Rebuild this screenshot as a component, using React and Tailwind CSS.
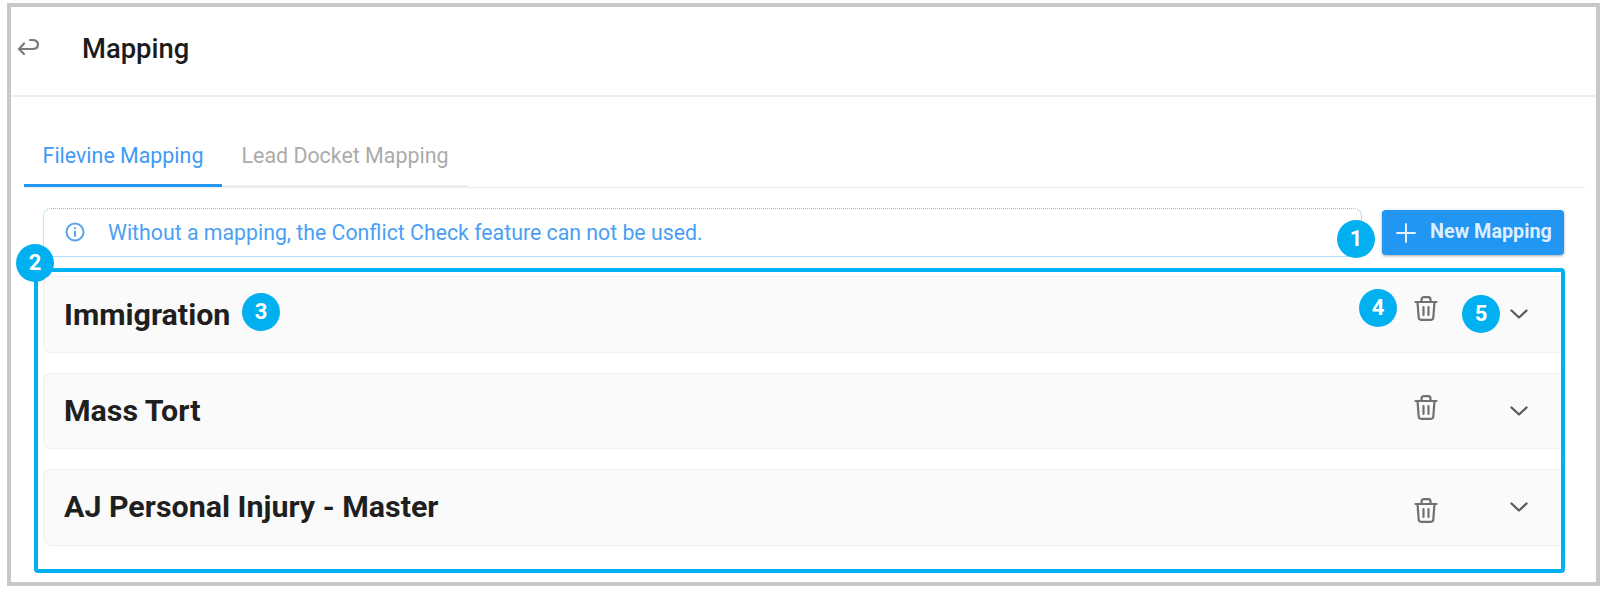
import React from "react";

function Badge({ n, className }) {
  return (
    <span className={`absolute flex h-[38px] w-[38px] items-center justify-center rounded-full bg-[#00b0f0] text-[22px] font-bold leading-none text-white ${className}`}>
      {n}
    </span>
  );
}

function Trash() {
  return (
    <svg width="24" height="25" viewBox="0 0 24 25" fill="none" stroke="#707070" strokeWidth="2.200" strokeLinecap="round" strokeLinejoin="round">
      <path d="M1.500 6h21" />
      <path d="M7.500 6V3.500C7.500 2 8.500 1.200 10 1.200h4c1.500 0 2.500.8 2.500 2.300V6" />
      <path d="M3.500 6l1.200 15.500c.1 1.500 1 2.300 2.400 2.300h9.800c1.400 0 2.300-.8 2.400-2.300L20.500 6" />
      <path d="M9.500 11v8M14.500 11v8" />
    </svg>
  );
}

function Chevron() {
  return (
    <svg width="18" height="10" viewBox="0 0 18 10" fill="none" stroke="#5a5a5a" strokeWidth="2.300" strokeLinecap="round" strokeLinejoin="round">
      <path d="M1.500 1.500L9 8.500l7.500-7" />
    </svg>
  );
}

function Row({ title, trashClass, titleClass = "", children }) {
  return (
    <div className="relative flex h-[76.500px] items-center rounded-l-lg border border-r-0 border-[#f0f0f0] bg-[#fafafa] pl-[20px] pr-[33px]">
      <span className={`text-[30.400px] font-bold leading-none tracking-normal text-[#1f1f1f] ${titleClass}`}>{title}</span>
      <div className="ml-auto flex items-center gap-[72px]">
        <div className={trashClass}>
          <Trash />
        </div>
        <Chevron />
      </div>
      {children}
    </div>
  );
}

export default function App() {
  return (
    <div className="h-[592px] w-[1600px] bg-white pb-[6px] pl-[7px] pt-[3px] font-['Roboto',sans-serif]">
      <div className="flex h-full flex-col border-4 border-[#c8c8c8] bg-white">
        <header className="flex h-[90px] shrink-0 items-center border-b-2 border-[#eeeeee] pb-[6px] pl-[6px]">
          <svg width="24" height="20" viewBox="0 0 24 20" fill="none" stroke="#7a7a7a" strokeWidth="2.200" strokeLinecap="round" strokeLinejoin="round">
            <path d="M7 5.500L2 11l5 5" />
            <path d="M2.500 11h13c3.500 0 5.500-2 5.500-4.500S19 2 15.500 2H13" />
          </svg>
          <h1 className="ml-[41px] mt-[4px] text-[27.400px] font-medium leading-none text-[#1c1c1c]">Mapping</h1>
        </header>

        <div className="flex min-h-0 flex-1 flex-col pl-[13px] pr-[11px] pt-[26px]">
          <nav className="flex h-[65px] shrink-0 border-b border-[#eeeeee]">
            <div className="flex w-[198px] items-center justify-center border-b-[3px] border-[#2196f3] pt-[6px] text-[21.400px] text-[#3f9bf5]">
              Filevine Mapping
            </div>
            <div className="flex w-[246px] items-center justify-center border-b-2 border-[#eeeeee] pb-[1px] pt-[6px] text-[21.400px] text-[#ababab]">
              Lead Docket Mapping
            </div>
          </nav>

          <div className="mt-[20px] flex shrink-0 items-start pl-[19px] pr-[21px]">
            <div className="relative flex h-[49px] flex-1 items-center rounded-lg border border-[#b3dcfb] border-t-[#7fc1f7] border-l-[#8cc8f8] pl-[21px] text-[21.300px] text-[#4a9ff5] [border-left-style:dotted] [border-top-style:dotted]">
              <svg className="-translate-y-px shrink-0" width="20" height="20" viewBox="0 0 20 20" fill="none" stroke="#5aa5ee" strokeWidth="2" strokeLinecap="round">
                <circle cx="10" cy="10" r="8.500" />
                <path d="M10 9.500v4.500M10 6v.2" />
              </svg>
              <span className="ml-[23px]">Without a mapping, the Conflict Check feature can not be used.</span>
              <Badge n="1" className="-right-[14px] top-[11px]" />
            </div>
            <button className="ml-[20px] mt-[2px] flex h-[45px] w-[182px] items-center rounded bg-[#2196f3] pl-[14px] text-[19.800px] font-bold leading-none text-[#ddeeff] shadow-[0_1px_3px_rgba(0,0,0,0.35)]">
              <svg width="20" height="20" viewBox="0 0 20 20" fill="none" stroke="#e4f1fd" strokeWidth="2" strokeLinecap="round">
                <path d="M10 1v18M1 10h18" />
              </svg>
              <span className="ml-[14px] -translate-y-px">New Mapping</span>
            </button>
          </div>

          <section className="relative ml-[10px] mr-[20px] mt-[11px] flex h-[305px] shrink-0 flex-col gap-[20px] rounded-sm border-4 border-[#00b0f0] pl-[5px] pt-[4px]">
            <Badge n="2" className="-left-[22px] -top-[28px]" />
            <Row title="Immigration" trashClass="-translate-y-[6px]" titleClass="translate-y-px">
              <Badge n="3" className="left-[198px] top-[16px]" />
              <Badge n="4" className="right-[164px] top-[12px]" />
              <Badge n="5" className="right-[61px] top-[18px]" />
            </Row>
            <Row title="Mass Tort" trashClass="-translate-y-[3px]" />
            <Row title="AJ Personal Injury - Master" trashClass="translate-y-[3px]" />
          </section>
        </div>
      </div>
    </div>
  );
}
